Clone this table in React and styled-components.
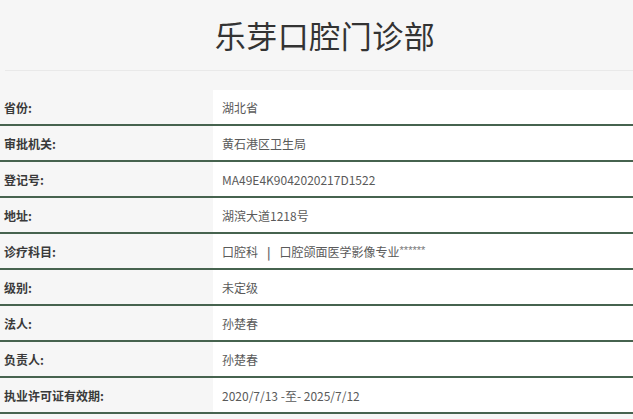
import React from "react";
import styled, { createGlobalStyle } from "styled-components";

const Global = createGlobalStyle`
  html, body { margin: 0; padding: 0; background: #f6f6f6; }
  body { font-family: "Noto Sans CJK SC", "Noto Sans", sans-serif; }
`;

const Page = styled.div`
  width: 633px;
  height: 419px;
  overflow: hidden;
  background: #f6f6f6;
`;

const Header = styled.div`
  margin-left: 5px;
  height: 71px;
  border-bottom: 1px solid #e9e9e9;
  display: flex;
  align-items: center;
  justify-content: center;
  padding-left: 12px;
  box-sizing: border-box;
`;

const Title = styled.h1`
  margin: 0;
  margin-top: -1px;
  font-size: 31px;
  font-weight: 400;
  color: #333;
  letter-spacing: 0.5px;
  line-height: 1;
`;

const Table = styled.div`
  margin-top: 19px;
  display: flex;
  flex-direction: column;
`;

const Row = styled.div`
  display: grid;
  grid-template-columns: 213px 1fr;
  height: 36px;
  box-sizing: border-box;
  border-bottom: 2px solid #46634f;
`;

const Label = styled.div`
  display: flex;
  align-items: center;
  padding-left: 4px;
  font-size: 12px;
  font-weight: 700;
  color: #3a3a3a;
  background: #f6f6f6;
`;

const Value = styled.div`
  display: flex;
  align-items: center;
  padding-left: 9px;
  font-size: 12px;
  color: #5a5a5a;
  background: #fff;
  white-space: pre;
`;

const Sep = styled.span`
  margin: 0 9px;
  font-weight: 700;
  color: #666;
`;

const Stars = styled.span`
  font-family: "Liberation Sans", sans-serif;
  font-size: 11px;
  color: #777;
  margin-top: -3px;
`;

const rows = [
  ["省份:", "湖北省"],
  ["审批机关:", "黄石港区卫生局"],
  ["登记号:", "MA49E4K9042020217D1522"],
  ["地址:", "湖滨大道1218号"],
  [
    "诊疗科目:",
    <>
      口腔科<Sep>|</Sep>口腔颌面医学影像专业<Stars>******</Stars>
    </>,
  ],
  ["级别:", "未定级"],
  ["法人:", "孙楚春"],
  ["负责人:", "孙楚春"],
  ["执业许可证有效期:", "2020/7/13 -至- 2025/7/12"],
];

export default function App() {
  return (
    <Page>
      <Global />
      <Header>
        <Title>乐芽口腔门诊部</Title>
      </Header>
      <Table>
        {rows.map(([k, v]) => (
          <Row key={k}>
            <Label>{k}</Label>
            <Value>{v}</Value>
          </Row>
        ))}
      </Table>
    </Page>
  );
}
